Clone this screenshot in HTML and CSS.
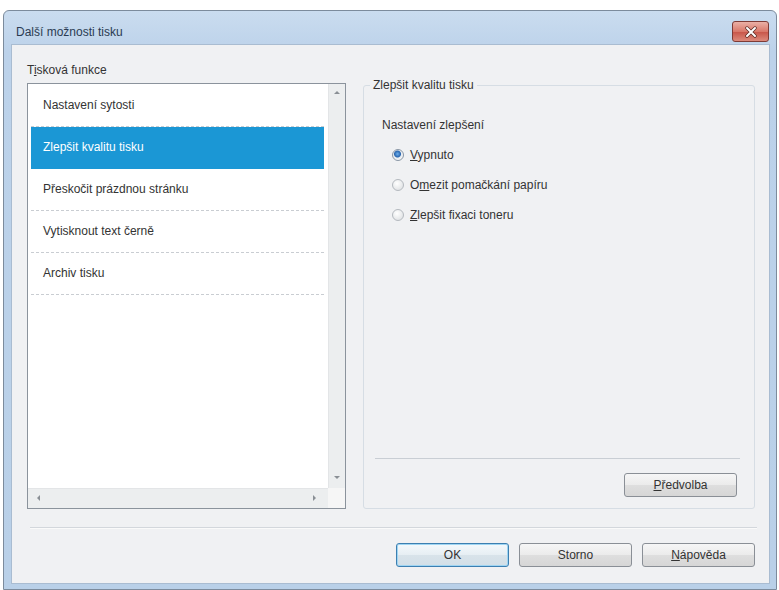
FILE: index.html
```html
<!DOCTYPE html>
<html>
	<head>
		<meta charset="UTF-8">
		<title>Další možnosti tisku</title>
		<link rel="stylesheet" href="styles.css">
	</head>
	<body>
		<div class="window">
			<div class="titlebar">
				<span class="title">Další možnosti tisku</span>
				<span class="close">
					<svg width="14" height="12" viewBox="0 0 14 12"><path d="M3 2 L11 10 M11 2 L3 10" stroke="#5a2a24" stroke-width="3.4" stroke-linecap="round"/><path d="M3 2 L11 10 M11 2 L3 10" stroke="#fff" stroke-width="2" stroke-linecap="round"/></svg>
				</span>
			</div>
			<div class="client">
				<div class="main">
					<div class="left">
						<div class="label">T<u>i</u>sková funkce</div>
						<div class="listbox">
							<ul class="items">
								<li>Nastavení sytosti</li>
								<li class="sel">Zlepšit kvalitu tisku</li>
								<li>Přeskočit prázdnou stránku</li>
								<li>Vytisknout text černě</li>
								<li>Archiv tisku</li>
							</ul>
							<div class="vscroll">
								<span class="arr up"></span>
								<span class="arr down"></span>
							</div>
							<div class="hscroll">
								<span class="arr lt"></span>
								<span class="arr rt"></span>
							</div>
							<div class="corner"></div>
						</div>
					</div>
					<fieldset class="group">
						<legend>Zlepšit kvalitu tisku</legend>
						<div class="group-body">
							<div class="sub">Nastavení zlepšení</div>
							<div class="radios">
								<div class="radio-row"><span class="radio on"></span><span><u>V</u>ypnuto</span></div>
								<div class="radio-row"><span class="radio"></span><span>O<u>m</u>ezit pomačkání papíru</span></div>
								<div class="radio-row"><span class="radio"></span><span><u>Z</u>lepšit fixaci toneru</span></div>
							</div>
							<div class="line"></div>
							<div class="actions">
								<button class="btn"><u>P</u>ředvolba</button>
							</div>
						</div>
					</fieldset>
				</div>
				<div class="sep"></div>
				<div class="footer">
					<button class="btn default">OK</button>
					<button class="btn">Storno</button>
					<button class="btn"><u>N</u>ápověda</button>
				</div>
			</div>
		</div>
	</body>
</html>
```
FILE: styles.css
```css
body{
	margin: 0;
	background: #fff;
	font-family: "Liberation Sans", Arial, sans-serif;
	font-size: 12px;
	color: #333;
}
u{
	text-decoration: underline;
	text-underline-offset: 1px;
}
.window{
	box-sizing: border-box;
	width: 774px;
	height: 580px;
	margin: 10px 0 0 3px;
	padding: 0 7px 7px 8px;
	border: 1px solid #7c8b9c;
	border-radius: 6px 6px 0 0;
	background: linear-gradient(#cadcef, #bcd2ea 40px, #b9d0e8);
}
.titlebar{
	display: flex;
	justify-content: space-between;
	align-items: flex-start;
	height: 34px;
}
.title{
	padding: 14px 0 0 4px;
	line-height: 14px;
	color: #2a3b52;
}
.close{
	display: flex;
	align-items: center;
	justify-content: center;
	box-sizing: border-box;
	width: 37px;
	height: 21px;
	margin-top: 10px;
	border: 1px solid #7e3b36;
	border-radius: 3px;
	background: linear-gradient(#eab0a6, #d9786a 50%, #c9584c 55%, #dc8a7c);
}
.client{
	box-sizing: border-box;
	height: 538px;
	padding: 18px 14px 0 15px;
	background: #f0f1f3;
	box-shadow: 0 0 0 1px #a9bcd1;
}
.main{
	display: flex;
	align-items: flex-start;
}
.label{
	line-height: 14px;
	margin-bottom: 6px;
}
.listbox{
	box-sizing: border-box;
	display: grid;
	grid-template-columns: 1fr 17px;
	grid-template-rows: 1fr 20px;
	width: 319px;
	height: 426px;
	border: 1px solid #8b939c;
	background: #fff;
}
.items{
	margin: 0;
	padding: 1px 4px 0 3px;
	list-style: none;
}
.items li{
	height: 41px;
	line-height: 41px;
	padding-left: 12px;
	border-bottom: 1px dashed #c9cdd2;
	color: #333;
}
.items li.sel{
	background: #1b97d5;
	border-bottom-color: #1b97d5;
	color: #fff;
}
.vscroll,
.hscroll{
	position: relative;
	background: #eceeef;
}
.vscroll{
	border-left: 1px solid #e3e5e7;
}
.hscroll{
	border-top: 1px solid #e3e5e7;
}
.corner{
	background: #f6f6f6;
}
.arr{
	position: absolute;
	width: 0;
	height: 0;
	border: 3px solid transparent;
}
.arr.up{
	top: 7px;
	left: 5px;
	border-bottom-color: #8a8f95;
	border-top-width: 0;
}
.arr.down{
	bottom: 9px;
	left: 5px;
	border-top-color: #8a8f95;
	border-bottom-width: 0;
}
.arr.lt{
	top: 6px;
	left: 9px;
	border-right-color: #8a8f95;
	border-left-width: 0;
}
.arr.rt{
	top: 6px;
	right: 12px;
	border-left-color: #8a8f95;
	border-right-width: 0;
}
.group{
	box-sizing: border-box;
	width: 395px;
	margin: 15px 0 0 17px;
	padding: 0;
	border: 1px solid #d6dde4;
	border-radius: 3px;
}
.group legend{
	margin-left: 6px;
	padding: 0 3px;
	line-height: 14px;
	color: #333;
}
.group-body{
	box-sizing: border-box;
	display: flex;
	flex-direction: column;
	height: 416px;
	padding: 26px 0 11px 0;
}
.sub{
	line-height: 14px;
	padding-left: 18px;
}
.radios{
	margin-top: 8px;
}
.radio-row{
	display: flex;
	align-items: center;
	gap: 6px;
	height: 30px;
	padding-left: 28px;
}
.radio{
	box-sizing: border-box;
	width: 12px;
	height: 12px;
	border: 1px solid #b4b9bf;
	border-radius: 50%;
	background: radial-gradient(circle at 40% 35%, #ffffff, #e4e6e8 70%);
}
.radio.on{
	border-color: #8a97a6;
	background: radial-gradient(circle at 45% 40%, #6fb0ec, #2a67b0 3px, #e8ecf0 4px, #f4f5f6 6px);
}
.line{
	margin: auto 14px 0 11px;
	height: 1px;
	background: #c9ced4;
}
.actions{
	display: flex;
	justify-content: flex-end;
	padding-right: 17px;
	margin-top: 14px;
}
.btn{
	box-sizing: border-box;
	width: 113px;
	height: 24px;
	padding: 0;
	border: 1px solid #8a8f96;
	border-radius: 3px;
	background: linear-gradient(#f6f6f6, #ebebeb 50%, #dedede 51%, #d6d6d6);
	font-family: "Liberation Sans", Arial, sans-serif;
	font-size: 12px;
	color: #333;
}
.btn.default{
	border-color: #3c7fb1;
	box-shadow: inset 0 0 0 1px #9fd5f2;
	background: linear-gradient(#f4f9fc, #e6eef3 50%, #d8e3ea 51%, #d2dfe7);
}
.sep{
	height: 1px;
	margin: 18px -2px 0 3px;
	background: #d3d7dc;
	box-shadow: 0 1px 0 #fafafa;
}
.footer{
	display: flex;
	justify-content: flex-end;
	gap: 10px;
	margin-top: 15px;
}
```
